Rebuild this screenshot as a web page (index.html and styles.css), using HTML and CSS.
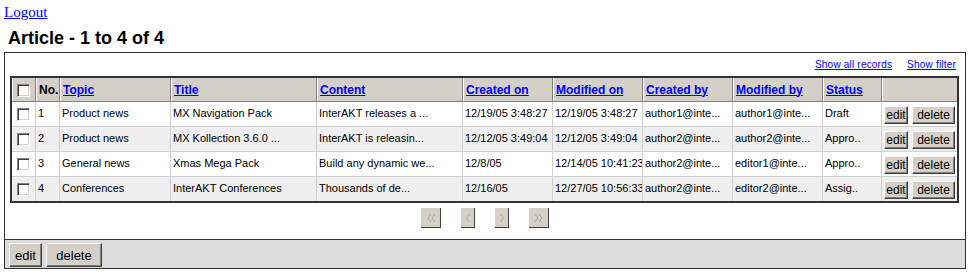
FILE: index.html
```html
<!DOCTYPE html>
<html lang="en">
<head>
    <meta charset="UTF-8">
    <title>Article list</title>
    <link rel="stylesheet" href="styles.css">
</head>
<body>
    <div class="logout"><a href="#">Logout</a></div>
    <h1 class="title">Article - 1 to 4 of 4</h1>

    <div class="list-box">
        <div class="list-links">
            <a href="#">Show all records</a>
            <a href="#">Show filter</a>
        </div>

        <table class="articles">
            <colgroup>
                <col style="width: 24px">
                <col style="width: 24px">
                <col style="width: 111px">
                <col style="width: 146px">
                <col style="width: 146px">
                <col style="width: 90px">
                <col style="width: 90px">
                <col style="width: 90px">
                <col style="width: 90px">
                <col style="width: 59px">
                <col style="width: 75px">
            </colgroup>
            <thead>
                <tr>
                    <th class="check-cell"><input type="checkbox" class="chk"></th>
                    <th>No.</th>
                    <th><a href="#">Topic</a></th>
                    <th><a href="#">Title</a></th>
                    <th><a href="#">Content</a></th>
                    <th><a href="#">Created on</a></th>
                    <th><a href="#">Modified on</a></th>
                    <th><a href="#">Created by</a></th>
                    <th><a href="#">Modified by</a></th>
                    <th><a href="#">Status</a></th>
                    <th></th>
                </tr>
            </thead>
            <tbody>
                <tr>
                    <td class="check-cell"><input type="checkbox" class="chk"></td>
                    <td>1</td>
                    <td>Product news</td>
                    <td>MX Navigation Pack</td>
                    <td>InterAKT releases a ...</td>
                    <td>12/19/05 3:48:27</td>
                    <td>12/19/05 3:48:27</td>
                    <td>author1@inte...</td>
                    <td>author1@inte...</td>
                    <td>Draft</td>
                    <td class="actions"><div class="row-btns"><button class="btn btn-edit">edit</button><button class="btn btn-delete">delete</button></div></td>
                </tr>
                <tr class="alt">
                    <td class="check-cell"><input type="checkbox" class="chk"></td>
                    <td>2</td>
                    <td>Product news</td>
                    <td>MX Kollection 3.6.0 ...</td>
                    <td>InterAKT is releasin...</td>
                    <td>12/12/05 3:49:04</td>
                    <td>12/12/05 3:49:04</td>
                    <td>author2@inte...</td>
                    <td>author2@inte...</td>
                    <td>Appro..</td>
                    <td class="actions"><div class="row-btns"><button class="btn btn-edit">edit</button><button class="btn btn-delete">delete</button></div></td>
                </tr>
                <tr>
                    <td class="check-cell"><input type="checkbox" class="chk"></td>
                    <td>3</td>
                    <td>General news</td>
                    <td>Xmas Mega Pack</td>
                    <td>Build any dynamic we...</td>
                    <td>12/8/05</td>
                    <td>12/14/05 10:41:23</td>
                    <td>author2@inte...</td>
                    <td>editor1@inte...</td>
                    <td>Appro..</td>
                    <td class="actions"><div class="row-btns"><button class="btn btn-edit">edit</button><button class="btn btn-delete">delete</button></div></td>
                </tr>
                <tr class="alt">
                    <td class="check-cell"><input type="checkbox" class="chk"></td>
                    <td>4</td>
                    <td>Conferences</td>
                    <td>InterAKT Conferences</td>
                    <td>Thousands of de...</td>
                    <td>12/16/05</td>
                    <td>12/27/05 10:56:33</td>
                    <td>author2@inte...</td>
                    <td>editor2@inte...</td>
                    <td>Assig..</td>
                    <td class="actions"><div class="row-btns"><button class="btn btn-edit">edit</button><button class="btn btn-delete">delete</button></div></td>
                </tr>
            </tbody>
        </table>

        <div class="pager">
            <a href="#" class="pg pg-wide" title="First">
                <svg width="20" height="20" viewBox="0 0 20 20"><path d="M10 6 L7 10 L10 14 M14 6 L11 10 L14 14" fill="none" stroke="#a8a8a8" stroke-width="1"/></svg>
            </a>
            <a href="#" class="pg" title="Previous">
                <svg width="14" height="20" viewBox="0 0 14 20"><path d="M8.5 6 L5.5 10 L8.5 14" fill="none" stroke="#a8a8a8" stroke-width="1"/></svg>
            </a>
            <a href="#" class="pg" title="Next">
                <svg width="14" height="20" viewBox="0 0 14 20"><path d="M5.5 6 L8.5 10 L5.5 14" fill="none" stroke="#a8a8a8" stroke-width="1"/></svg>
            </a>
            <a href="#" class="pg pg-wide" title="Last">
                <svg width="20" height="20" viewBox="0 0 20 20"><path d="M6 6 L9 10 L6 14 M10 6 L13 10 L10 14" fill="none" stroke="#a8a8a8" stroke-width="1"/></svg>
            </a>
        </div>

        <div class="bottom-bar">
            <button class="btn btn-big btn-big-edit">edit</button>
            <button class="btn btn-big btn-big-delete">delete</button>
        </div>
    </div>
</body>
</html>
```

FILE: styles.css
```css
body {
    margin: 4px;
    font-family: "Liberation Serif", "Times New Roman", serif;
    background-color: white;
    color: black;
}
a {
    color: #0000ff;
}
.logout {
    font-size: 15px;
    line-height: 17px;
}
.title {
    font-family: "Liberation Sans", Arial, sans-serif;
    font-size: 18px;
    line-height: 21px;
    font-weight: bold;
    margin: 7px 0 3px 4px;
}
.list-box {
    border: 1px solid #333;
    font-family: "Liberation Sans", Arial, sans-serif;
}
.list-links {
    display: flex;
    justify-content: flex-end;
    gap: 15px;
    font-size: 10px;
    line-height: 12px;
    letter-spacing: 0.2px;
    margin: 6px 9px 5px 0;
}
.articles {
    table-layout: fixed;
    width: 949px;
    margin: 0 5px;
    border: 2px solid #333;
    border-collapse: separate;
    border-spacing: 0;
    font-size: 11px;
}
.articles th {
    background-color: #d4d0c8;
    height: 23px;
    padding: 0 3px;
    text-align: left;
    font-size: 12px;
    font-weight: bold;
    white-space: nowrap;
    overflow: hidden;
    border-right: 1px solid #808080;
    border-bottom: 1px solid #808080;
    box-shadow: inset 1px 0 0 #ffffff;
}
.articles td {
    padding: 0 2px 1px;
    white-space: nowrap;
    overflow: hidden;
    vertical-align: middle;
    line-height: 13px;
    border-right: 1px solid #d0d0d0;
    border-bottom: 1px solid #d0d0d0;
}
.articles th:last-child,
.articles td:last-child {
    border-right: none;
}
.articles tbody tr:last-child td {
    border-bottom: none;
}
.articles tr.alt td {
    background-color: #efefef;
}
.articles .check-cell {
    padding: 0;
    text-align: center;
}
.chk {
    appearance: none;
    -webkit-appearance: none;
    width: 13px;
    height: 13px;
    margin: 0;
    display: inline-block;
    vertical-align: middle;
    background-color: white;
    border: 1px solid;
    border-color: #808080 #ffffff #ffffff #808080;
    box-shadow: inset 1px 1px 0 #404040, inset -1px -1px 0 #d4d0c8;
}
.articles td.actions {
    padding: 4px 2px 2px;
}
.row-btns {
    display: flex;
    gap: 4px;
    height: 18px;
}
.btn {
    font-family: "Liberation Sans", Arial, sans-serif;
    background-color: #d4d0c8;
    color: black;
    border: 1px solid;
    border-color: #ffffff #404040 #404040 #ffffff;
    box-shadow: inset -1px -1px 0 #808080;
    padding: 0;
    margin: 0;
    cursor: pointer;
}
.btn-edit,
.btn-delete {
    height: 18px;
    font-size: 12px;
    line-height: 14px;
}
.btn-edit {
    width: 24px;
}
.btn-delete {
    width: 43px;
}
.pager {
    display: flex;
    justify-content: center;
    gap: 20px;
    padding: 5px 0 11px;
}
.pg {
    display: block;
    width: 14px;
    height: 20px;
    box-sizing: border-box;
    background-color: #d4d0c8;
    border-right: 1px solid #404040;
    border-bottom: 1px solid #404040;
}
.pg-wide {
    width: 20px;
}
.pg svg {
    display: block;
}
.bottom-bar {
    border-top: 1px solid #333;
    background-color: #dcdcdc;
    padding: 3px 0 0 4px;
    height: 25px;
    display: flex;
    gap: 4px;
}
.btn-big {
    height: 24px;
    font-size: 13px;
}
.btn-big-edit {
    width: 33px;
}
.btn-big-delete {
    width: 56px;
}
```
